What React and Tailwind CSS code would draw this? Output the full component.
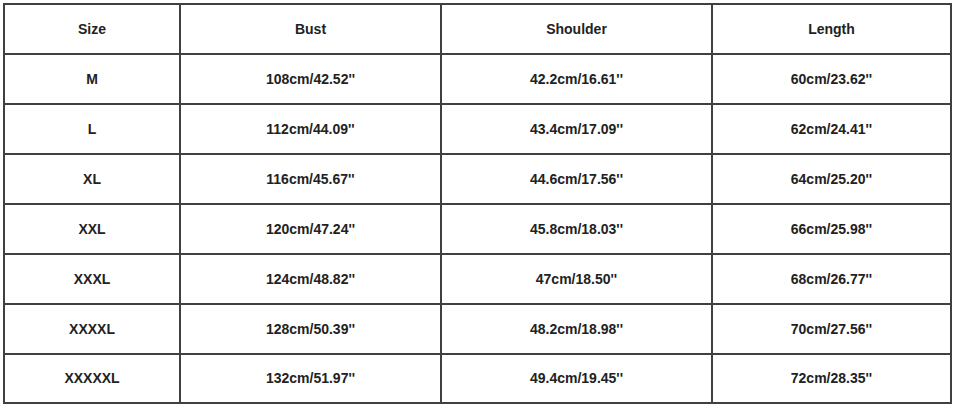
const headers = ['Size', 'Bust', 'Shoulder', 'Length']

const rows = [
  ['M', "108cm/42.52''", "42.2cm/16.61''", "60cm/23.62''"],
  ['L', "112cm/44.09''", "43.4cm/17.09''", "62cm/24.41''"],
  ['XL', "116cm/45.67''", "44.6cm/17.56''", "64cm/25.20''"],
  ['XXL', "120cm/47.24''", "45.8cm/18.03''", "66cm/25.98''"],
  ['XXXL', "124cm/48.82''", "47cm/18.50''", "68cm/26.77''"],
  ['XXXXL', "128cm/50.39''", "48.2cm/18.98''", "70cm/27.56''"],
  ['XXXXXL', "132cm/51.97''", "49.4cm/19.45''", "72cm/28.35''"],
]

export default function App() {
  return (
    <div className="w-[954px] h-[407px] bg-white pt-[3px] pl-[3px] font-['Liberation_Sans',Arial,sans-serif]">
      <div className="grid w-fit grid-cols-[174px_259px_269px_237px] grid-rows-[48px_48px_48px_48px_48px_48px_48px_47px] gap-[2px] bg-[#404040] p-[2px]">
        {headers.map((h) => (
          <div key={h} className="flex items-center justify-center bg-white text-[14px] font-bold text-[#222]">
            {h}
          </div>
        ))}
        {rows.map((r) =>
          r.map((c, i) => (
            <div key={r[0] + i} className="flex items-center justify-center bg-white text-[14px] font-bold text-[#222]">
              {c}
            </div>
          ))
        )}
      </div>
    </div>
  )
}
